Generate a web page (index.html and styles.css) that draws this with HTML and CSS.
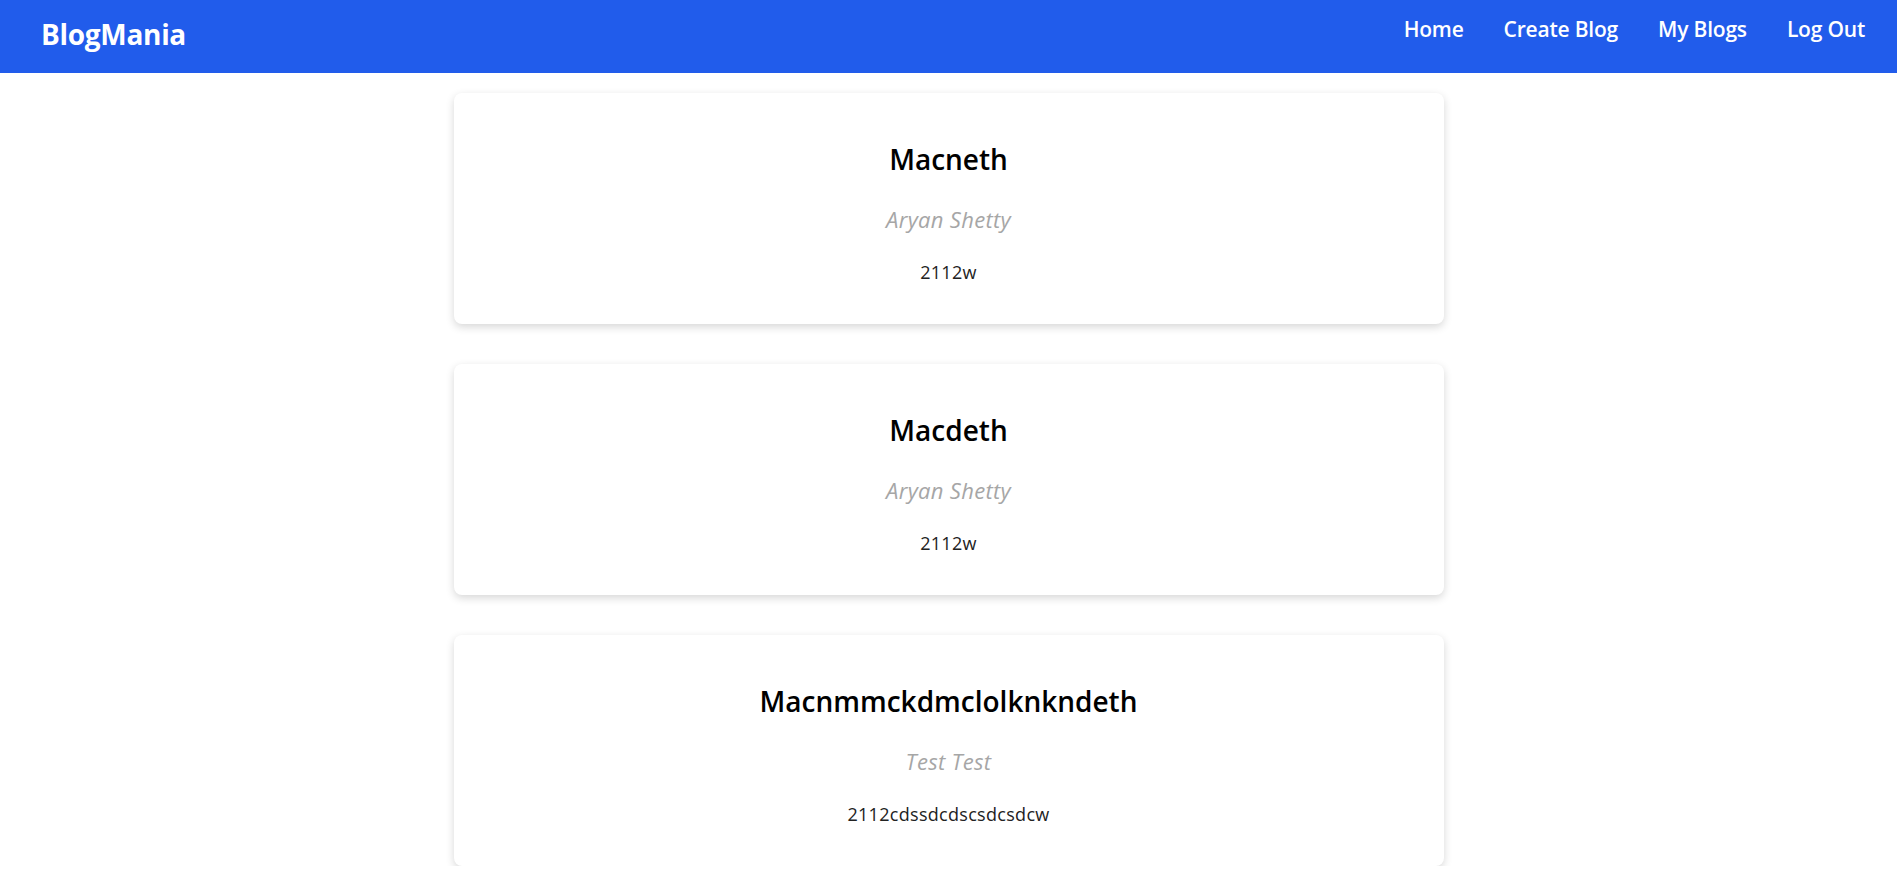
FILE: index.html
```html
<!DOCTYPE html>
<html lang="en">
<head>
<meta charset="utf-8">
<title>BlogMania</title>
<link rel="stylesheet" href="styles.css">
</head>
<body>
<nav class="navbar">
  <div class="brand">BlogMania</div>
  <ul class="nav-links">
    <li><a href="#">Home</a></li>
    <li><a href="#">Create Blog</a></li>
    <li><a href="#">My Blogs</a></li>
    <li><a href="#">Log Out</a></li>
  </ul>
</nav>
<main class="blog-list">
  <article class="card">
    <h2 class="title">Macneth</h2>
    <p class="author">Aryan Shetty</p>
    <p class="body">2112w</p>
  </article>
  <article class="card">
    <h2 class="title">Macdeth</h2>
    <p class="author">Aryan Shetty</p>
    <p class="body">2112w</p>
  </article>
  <article class="card">
    <h2 class="title">Macnmmckdmclolknkndeth</h2>
    <p class="author">Test Test</p>
    <p class="body">2112cdssdcdscsdcsdcw</p>
  </article>
</main>
</body>
</html>
```
FILE: styles.css
```css
* { box-sizing: border-box; }
html, body { margin: 0; padding: 0; }
body {
  font-family: "Open Sans", "Noto Sans", sans-serif;
  background: #ffffff;
  color: #111;
}
.navbar {
  height: 73px;
  background: #215ceb;
  display: flex;
  justify-content: space-between;
  align-items: flex-start;
  padding: 14px 32px 0 41px;
  color: #fff;
}
.brand {
  font-size: 28px;
  font-weight: 700;
  line-height: 40px;
  letter-spacing: -0.3px;
}
.nav-links {
  list-style: none;
  margin: 0;
  padding: 0;
  display: flex;
  gap: 40px;
}
.nav-links a {
  color: #fff;
  text-decoration: none;
  font-size: 21px;
  font-weight: 600;
  line-height: 30px;
  letter-spacing: -0.2px;
}
.blog-list {
  width: 990px;
  margin: 20px auto 0;
  display: flex;
  flex-direction: column;
  gap: 40px;
}
.card {
  height: 231px;
  background: #fff;
  border-radius: 8px;
  box-shadow: 0 3px 9px rgba(0, 0, 0, 0.16);
  padding: 49px 20px 0;
  text-align: center;
}
.title {
  margin: 0 0 28px;
  font-size: 28px;
  font-weight: 600;
  line-height: 35px;
  color: #000;
}
.author {
  margin: 0 0 27px;
  font-size: 22px;
  font-style: italic;
  line-height: 28px;
  letter-spacing: 0.3px;
  color: #a6a6a6;
}
.body {
  margin: 0;
  font-size: 18px;
  line-height: 24px;
  letter-spacing: 0.3px;
  color: #222;
}
```
